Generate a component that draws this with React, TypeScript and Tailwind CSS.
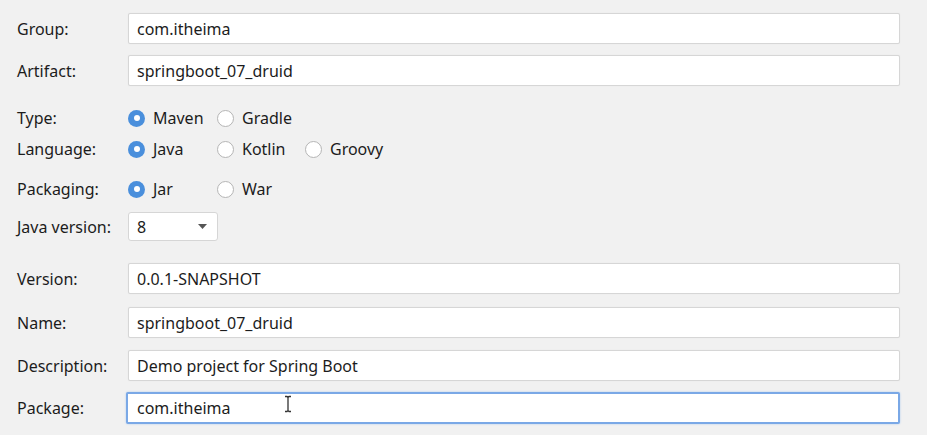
import React from "react";

const font = { fontFamily: '"Noto Sans", "Open Sans", sans-serif' };

function Label({ children }: { children: React.ReactNode }) {
  return <div className="w-[111px] shrink-0 text-[16px] text-[#1c1c1c]">{children}</div>;
}

function Field({ label, value, className = "", focused = false, cursor = false }: { label: string; value: string; className?: string; focused?: boolean; cursor?: boolean }) {
  return (
    <div className={`flex items-center ${className}`}>
      <Label>{label}</Label>
      <div
        className={
          focused
            ? "relative flex h-[32px] flex-1 items-center rounded-[2px] border-2 border-[#7aa8e6] bg-white pl-[9px] text-[16px] text-[#1c1c1c] shadow-[0_0_2px_#a9c8f0] ml-[-2px]"
            : "relative flex h-[31px] flex-1 items-center rounded-[2px] border border-[#d6d6d6] bg-white pl-[8px] text-[16px] text-[#1c1c1c] shadow-[0_0_1px_#e0e0e0]"
        }
      >
        {value}
        {cursor && (
          <svg className="absolute left-[155px] top-[1px]" width="10" height="18" viewBox="0 0 10 18">
            <path d="M2 1.5h2l1 1 1-1h2M5 2.5v13M2 16.5h2l1-1 1 1h2" stroke="#333" strokeWidth="1.3" fill="none" />
          </svg>
        )}
      </div>
    </div>
  );
}

function Radio({ label, checked = false, width }: { label: string; checked?: boolean; width: string }) {
  return (
    <div className={`flex items-center ${width}`}>
      {checked ? (
        <span className="flex h-[17px] w-[17px] items-center justify-center rounded-full bg-[#4a8fdc]">
          <span className="h-[6px] w-[6px] rounded-full bg-white" />
        </span>
      ) : (
        <span className="h-[17px] w-[17px] rounded-full border border-[#b5b5b5] bg-white" />
      )}
      <span className="ml-[8px] text-[16px] text-[#1c1c1c]">{label}</span>
    </div>
  );
}

export default function App() {
  return (
    <div className="h-[435px] w-[927px] overflow-hidden bg-[#f1f1f1] pl-[17px] pr-[27px] pt-[13px]" style={font}>
      <Field label="Group:" value="com.itheima" />
      <Field label="Artifact:" value="springboot_07_druid" className="mt-[11px]" />

      <div className="mt-[20px] flex h-[24px] items-center">
        <Label>Type:</Label>
        <Radio label="Maven" checked width="w-[89px]" />
        <Radio label="Gradle" width="w-[88px]" />
      </div>
      <div className="mt-[7px] flex h-[24px] items-center">
        <Label>Language:</Label>
        <Radio label="Java" checked width="w-[89px]" />
        <Radio label="Kotlin" width="w-[88px]" />
        <Radio label="Groovy" width="w-[88px]" />
      </div>
      <div className="mt-[16px] flex h-[24px] items-center">
        <Label>Packaging:</Label>
        <Radio label="Jar" checked width="w-[89px]" />
        <Radio label="War" width="w-[88px]" />
      </div>
      <div className="mt-[11px] flex items-center">
        <Label>Java version:</Label>
        <div className="flex h-[29px] w-[90px] items-center justify-between rounded-[3px] border border-[#d6d6d6] bg-white pl-[8px] pr-[10px] text-[16px] text-[#1c1c1c]">
          <span>8</span>
          <svg width="9" height="5" viewBox="0 0 9 5">
            <path d="M0 0h9L4.5 5z" fill="#555" />
          </svg>
        </div>
      </div>

      <Field label="Version:" value="0.0.1-SNAPSHOT" className="mt-[22px]" />
      <Field label="Name:" value="springboot_07_druid" className="mt-[13px]" />
      <Field label="Description:" value="Demo project for Spring Boot" className="mt-[12px]" />
      <Field label="Package:" value="com.itheima" className="mt-[11px]" focused cursor />
    </div>
  );
}
